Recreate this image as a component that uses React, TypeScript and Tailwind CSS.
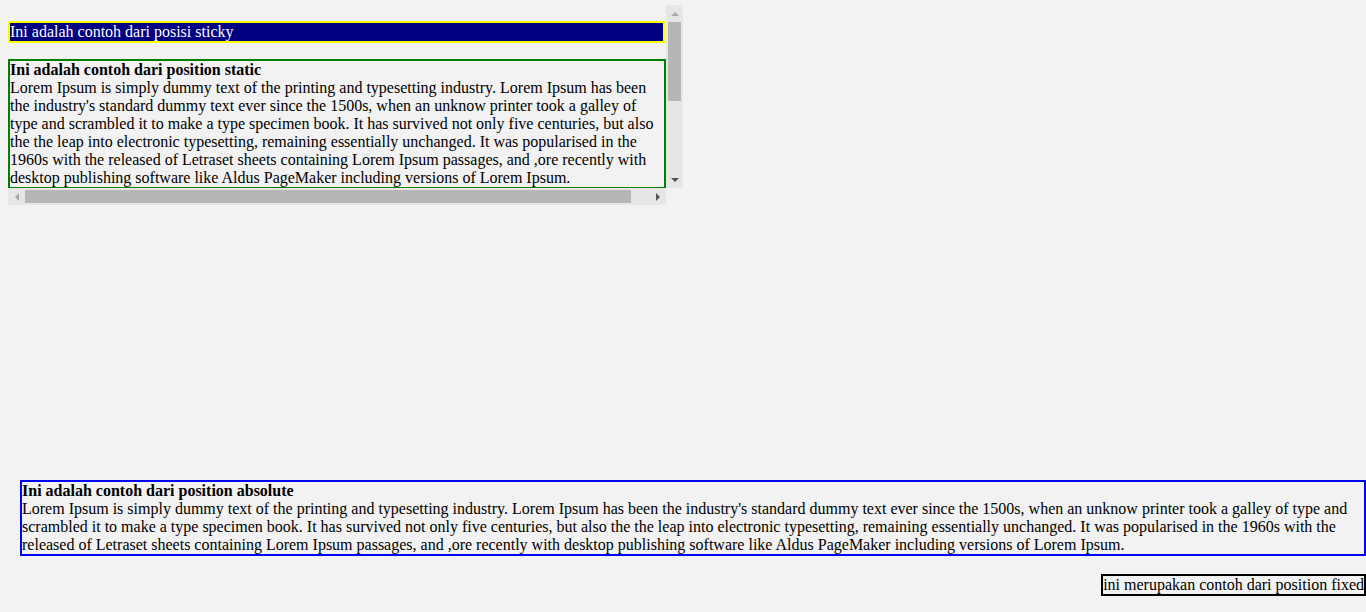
import React from "react";

const lorem =
  "Lorem Ipsum is simply dummy text of the printing and typesetting industry. Lorem Ipsum has been the industry's standard dummy text ever since the 1500s, when an unknow printer took a galley of type and scrambled it to make a type specimen book. It has survived not only five centuries, but also the the leap into electronic typesetting, remaining essentially unchanged. It was popularised in the 1960s with the released of Letraset sheets containing Lorem Ipsum passages, and ,ore recently with desktop publishing software like Aldus PageMaker including versions of Lorem Ipsum.";

function Tri({ dir, color }: { dir: "up" | "down" | "left" | "right"; color: string }) {
  if (dir === "up" || dir === "down") {
    return (
      <svg width="8" height="4" viewBox="0 0 8 4">
        <polygon points={dir === "up" ? "0,4 8,4 4,0" : "0,0 8,0 4,4"} fill={color} />
      </svg>
    );
  }
  return (
    <svg width="4" height="8" viewBox="0 0 4 8">
      <polygon points={dir === "left" ? "4,0 4,8 0,4" : "0,0 0,8 4,4"} fill={color} />
    </svg>
  );
}

export default function App() {
  return (
    <div className="flex h-[612px] w-[1366px] flex-col overflow-hidden bg-[#f2f2f2] font-['Liberation_Serif','Times_New_Roman',serif] text-[16px] leading-[normal] text-black">
      <div className="ml-[8px] mt-[5px] flex w-[675px]">
        <div className="flex w-[658px] flex-col">
          <div className="h-[183px] overflow-hidden pt-[16px]">
            <div className="w-[657px] border-2 border-[#ffff00] bg-[#000080] text-white">
              Ini adalah contoh dari posisi sticky
            </div>
            <div className="mt-[16px] w-[658px] border-2 border-[#008000]">
              <b>Ini adalah contoh dari position static</b>
              <br />
              {lorem}
            </div>
          </div>
          <div className="flex h-[17px] items-center bg-[#e6e6e6]">
            <div className="flex h-[17px] w-[17px] items-center justify-center">
              <Tri dir="left" color="#a8a8a8" />
            </div>
            <div className="h-[13px] w-[606px] bg-[#b6b6b6]" />
            <div className="flex-1" />
            <div className="flex h-[17px] w-[17px] items-center justify-center">
              <Tri dir="right" color="#555555" />
            </div>
          </div>
        </div>
        <div className="flex h-[183px] w-[17px] flex-col items-center bg-[#e6e6e6]">
          <div className="flex h-[17px] w-[17px] items-center justify-center">
            <Tri dir="up" color="#a8a8a8" />
          </div>
          <div className="h-[79px] w-[13px] bg-[#b6b6b6]" />
          <div className="flex-1" />
          <div className="flex h-[17px] w-[17px] items-center justify-center">
            <Tri dir="down" color="#555555" />
          </div>
        </div>
      </div>

      <div className="ml-[20px] mt-[275px] w-[1346px] border-2 border-[#0000ff]">
        <b>Ini adalah contoh dari position absolute</b>
        <br />
        {lorem}
      </div>

      <div className="mb-[16px] mt-auto self-end border-2 border-black">
        ini merupakan contoh dari position fixed
      </div>
    </div>
  );
}
